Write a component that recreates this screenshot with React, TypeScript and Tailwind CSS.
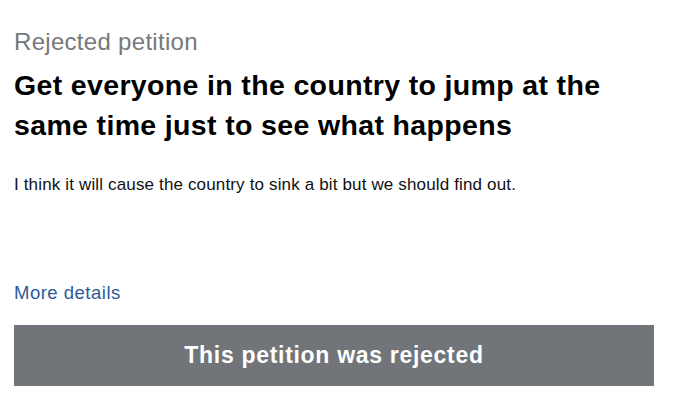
export default function App() {
  return (
    <div className="min-h-screen bg-white px-[14px] pt-[27px] font-['Liberation_Sans',Arial,sans-serif]">
      <p className="text-[24px] leading-[30px] tracking-[0.3px] text-[#75787c]">Rejected petition</p>
      <h1 className="mt-[8px] text-[28.5px] font-bold leading-[40px] tracking-[0.35px] text-black">
        Get everyone in the country to jump at the same time just to see what happens
      </h1>
      <p className="mt-[29px] text-[17px] leading-[22px] tracking-[0.15px] text-[#111]">
        I think it will cause the country to sink a bit but we should find out.
      </p>
      <a href="#" className="mt-[85px] block text-[18.5px] leading-[24px] tracking-[0.5px] text-[#2d5a9a]">
        More details
      </a>
      <div className="mt-[20px] flex h-[61px] w-[640px] items-center justify-center bg-[#717579]">
        <span className="text-[23px] font-bold tracking-[0.7px] text-white">This petition was rejected</span>
      </div>
    </div>
  )
}
